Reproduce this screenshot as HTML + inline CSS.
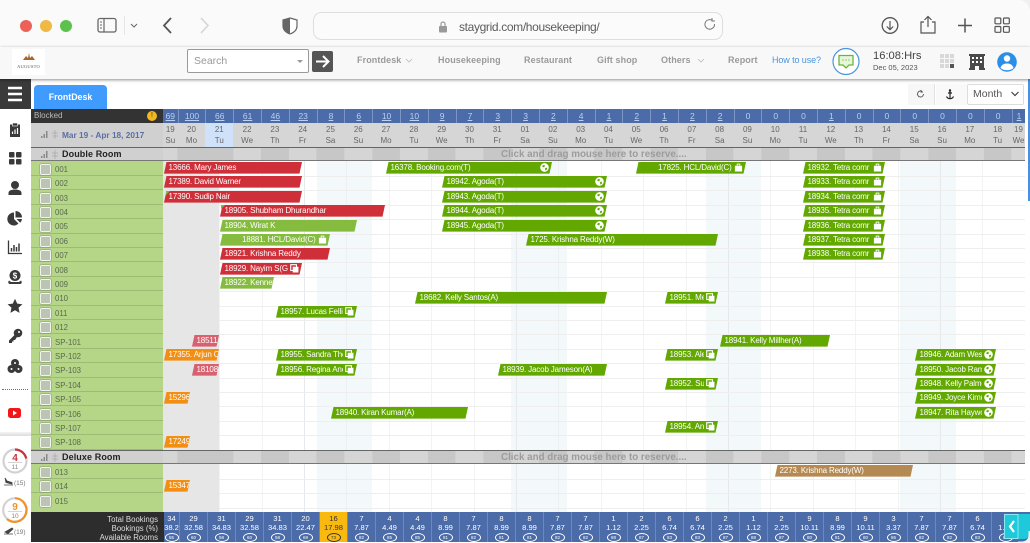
<!DOCTYPE html>
<html><head><meta charset="utf-8"><title>StayGrid</title>
<style>
*{box-sizing:border-box}
html,body{margin:0;padding:0;width:1030px;height:543px;overflow:hidden;background:#fff;font-family:"Liberation Sans",sans-serif}
.a{position:absolute}
#chrome{left:0;top:0;width:1030px;height:47px;background:#fafafa}
#nav{left:0;top:47px;width:1030px;height:32px;background:#f8f8f8;box-shadow:0 1px 3px rgba(0,0,0,.45);z-index:5}
.n{position:absolute;top:55px;font-size:9px;font-weight:bold;color:#9a9a9a;z-index:6;white-space:nowrap;letter-spacing:.1px}
#hd1,#hd2{left:163px;width:862px;display:flex}
#hd1{top:109px;height:14px;background:#4b6ba9}
#hd2{top:123px;height:24px;background:#d6d6d6}
#hd1 i,#hd2 i,#ft i{display:block;font-style:normal;flex:none;text-align:center}
#hd1 i{width:27.8px;border-left:1px solid #7d95c2;font-size:8.5px;line-height:14px;color:#b9d0f0;text-decoration:underline}
#hd1 i.z{text-decoration:none}
#hd2 i{width:27.8px;font-size:8px;line-height:10.5px;padding-top:2px;color:#666}
#hd1 i.f,#hd2 i.f{width:14.6px;border-left:0}
#hd2 i.t{background:#d0e2fa}
#grid{left:163px;top:161px;width:862px;height:351px;background-image:repeating-linear-gradient(90deg,transparent 0,transparent 14px,#e6e8ea 14px,#e6e8ea 14.6px,transparent 14.6px,transparent 42.4px);background-size:auto}
.we{position:absolute;top:161px;height:351px;width:55.6px;background:#f3f8fb}
.hl{position:absolute;left:163px;width:862px;height:1px;background:#eeeeee}
#hatch{left:163px;top:161px;width:56px;height:351px;background-color:#ececec;background-image:radial-gradient(#d6d6d6 .7px,transparent .8px);background-size:2px 2px}
#gc{left:31px;top:161px;width:132px;height:351px;background:#b5d687}
.band{position:absolute;left:31px;width:994px;height:14px;background:#d0d0d0;border-top:1px solid #666;border-bottom:1px solid #777}
.bandg{position:absolute;left:132px;top:0;right:0;bottom:0;background-image:repeating-linear-gradient(90deg,#c7c7c7 0,#c7c7c7 27.8px,#d5d5d5 27.8px,#d5d5d5 55.6px);background-position:42.4px 0}
.band b{position:absolute;left:31px;top:0;font-size:9px;line-height:13px;color:#222;letter-spacing:.1px}
.band em{position:absolute;left:470px;top:0;font-style:normal;font-weight:bold;font-size:9.8px;line-height:13px;color:#9c9c9c;white-space:nowrap}
.l{position:absolute;left:31px;width:132px;height:14.4px;background:#b5d687;border-bottom:1px solid #9dbb73;font-size:7.8px;line-height:15px;color:#5a6a50;padding-left:24px}
.l:before{content:"";position:absolute;left:9px;top:2px;width:9px;height:9px;background:#bcc4b4;border:1px solid #f1f3ee;box-shadow:0 0 0 .5px #8b977f;border-radius:1.5px}
.b{position:absolute;height:11.6px;clip-path:polygon(2.5px 0,100% 0,calc(100% - 2.5px) 100%,0 100%);color:#fff;font-size:8px;letter-spacing:-.15px;line-height:11.6px;white-space:nowrap;overflow:hidden;padding-left:4.5px;background:#62a800}
.b span{display:block;overflow:hidden}
.b svg{position:absolute;right:3.5px;top:1.3px;width:9px;height:9px}
.R{background:#cf2f38}.L{background:#85bb3e}.O{background:#f28e12}.P{background:#d8616f}.W{background:#b58a52}
.s span{width:calc(100% - 14px)}
#ft{left:164px;top:512px;width:866px;height:29.5px;display:flex;background:#4b6ba9}
#ft i{width:28px;border-left:1px solid #7088b8;color:#fff;font-size:7.6px;line-height:8.6px;padding-top:3px;overflow:hidden;white-space:nowrap}
#ft i.f{width:15px;border-left:0}
#ft i.y{background:#f9b90f;color:#333}
#ft u{display:block;width:14px;height:9px;margin:1px auto 0;border:1px solid #fff;border-radius:50%;font-size:4.5px;line-height:7px;text-decoration:none}
#ft i.y u{border-color:#333}
#fl{left:31px;top:512px;width:133px;height:29.5px;background:#2d2d2d;color:#ddd;font-size:7.8px;line-height:9.3px;text-align:right;padding:2.5px 6px 0 0}
.si{position:absolute;left:7px;width:16px;height:16px}
</style></head><body>

<div id="chrome" class="a"></div>
<svg class="a" style="left:0;top:0;z-index:6" width="1030" height="47">
<circle cx="26" cy="26" r="6" fill="#ea6258"/><circle cx="46" cy="26" r="6" fill="#f0b844"/><circle cx="66" cy="26" r="6" fill="#5cc14d"/>
<rect x="98" y="18.5" width="18" height="13.5" rx="2" fill="none" stroke="#666" stroke-width="1.3"/><line x1="104" y1="19" x2="104" y2="32" stroke="#666" stroke-width="1.2"/><path d="M100 22h2M100 25h2M100 28h2" stroke="#666"/>
<line x1="124.500" y1="16" x2="124.500" y2="35" stroke="#e5e5e5"/>
<path d="M131 24l3 3 3-3" fill="none" stroke="#666" stroke-width="1"/>
<path d="M171 18l-7 7.500 7 7.500" fill="none" stroke="#555" stroke-width="1.800"/>
<path d="M201 18l7 7.500-7 7.500" fill="none" stroke="#d5d5d5" stroke-width="1.600"/>
<path d="M290 18l7 2v6c0 4-3 6.500-7 8-4-1.500-7-4-7-8v-6z" fill="#fff" stroke="#666" stroke-width="1.200"/><path d="M290 18l-7 2v6c0 4 3 6.500 7 8z" fill="#666"/>
<rect x="313.500" y="12.500" width="409" height="27" rx="8" fill="#fbfbfb" stroke="#dedede"/>
<rect x="439" y="26" width="8" height="6.500" rx="1" fill="#999"/><path d="M441 26v-2a2 2 0 0 1 4 0v2" fill="none" stroke="#999" stroke-width="1.200"/>
<path d="M714.500 24a4.800 4.800 0 1 1-2-3.500M712 18v3h3" fill="none" stroke="#777" stroke-width="1"/>
<circle cx="890" cy="25.500" r="7.800" fill="none" stroke="#555" stroke-width="1.300"/><path d="M890 21v8.500M886.800 26.500l3.200 3.200 3.200-3.200" fill="none" stroke="#555" stroke-width="1.200"/>
<path d="M924 22h-3v11h14v-11h-3M928 27V16.500M924.500 20l3.500-3.500 3.500 3.500" fill="none" stroke="#555" stroke-width="1.200"/>
<path d="M965 18.500v14M958 25.500h14" stroke="#555" stroke-width="1.500"/>
<g fill="none" stroke="#555" stroke-width="1.200"><rect x="995" y="18" width="5.800" height="5.800" rx="1"/><rect x="1003.500" y="18" width="5.800" height="5.800" rx="1"/><rect x="995" y="26.500" width="5.800" height="5.800" rx="1"/><rect x="1003.500" y="26.500" width="5.800" height="5.800" rx="1"/></g>
</svg>
<div class="a" style="left:459px;top:19px;font-size:12px;color:#5c5c5c;z-index:7;white-space:nowrap;line-height:16px;letter-spacing:-.35px">staygrid.com/housekeeping/</div>

<div id="nav" class="a"></div>
<div class="a" style="left:12px;top:49px;width:33px;height:26px;background:#fff;z-index:6;text-align:center;font-family:'Liberation Serif',serif;font-size:4.500px;color:#555;padding-top:15px;letter-spacing:.2px">AUGUSTO</div>
<svg class="a" style="left:22px;top:52px;z-index:7" width="14" height="10"><path d="M1 8l3-4 2 2 1-5 1 5 2-2 3 4z" fill="#a5672a"/></svg>
<div class="a" style="left:187px;top:49px;width:122px;height:24px;background:#fff;border:1px solid #9a9a9a;border-radius:2px;z-index:6;font-size:10.500px;line-height:22px;color:#999;padding-left:6px">Search<span class="a" style="right:5px;top:10px;border:3px solid transparent;border-top:3px solid #999"></span></div>
<div class="a" style="left:312px;top:51px;width:21px;height:21px;background:#555;border-radius:2px;z-index:6"></div>
<svg class="a" style="left:312px;top:51px;z-index:7" width="21" height="21"><path d="M4 10.500h12M11 5l5.500 5.500L11 16" fill="none" stroke="#fff" stroke-width="2"/></svg>
<div class="n" style="left:357px">Frontdesk</div>
<div class="n" style="left:438px">Housekeeping</div>
<div class="n" style="left:524px">Restaurant</div>
<div class="n" style="left:597px">Gift shop</div>
<div class="n" style="left:661px">Others</div>
<div class="n" style="left:728px">Report</div>
<div class="n" style="left:772px;color:#4a94dc;font-weight:normal;letter-spacing:-.1px">How to use?</div>
<svg class="a" style="left:0;top:47px;z-index:7" width="1030" height="32">
<path d="M406 12l3 3 3-3M698 12l3 3 3-3" fill="none" stroke="#bbb" stroke-width=".8"/>
<circle cx="846" cy="14.500" r="13" fill="#fff" stroke="#4a94dc" stroke-width="1.200"/>
<path d="M839 8.500h14v9.500h-4l-3 3-3-3h-4z" fill="#e6f6d8" stroke="#6db33f" stroke-width="1.300"/><path d="M842.500 13h1M845.500 13h1M848.500 13h1" stroke="#6db33f" stroke-width="1.200"/>
<g fill="#d8d8d8"><rect x="940" y="7" width="4" height="4"/><rect x="945" y="7" width="4" height="4"/><rect x="950" y="7" width="4" height="4"/><rect x="940" y="12" width="4" height="4"/><rect x="945" y="12" width="4" height="4"/><rect x="950" y="12" width="4" height="4"/><rect x="940" y="17" width="4" height="4"/><rect x="945" y="17" width="4" height="4"/><rect x="950" y="17" width="4" height="4" fill="#555"/></g>
<path d="M969 7h16v2h-1v12h1v2h-6v-4h-4v4h-6v-2h1V9h-1z" fill="#4a4a4a"/><g fill="#fff"><rect x="972" y="10" width="2" height="2"/><rect x="976" y="10" width="2" height="2"/><rect x="980" y="10" width="2" height="2"/><rect x="972" y="14" width="2" height="2"/><rect x="976" y="14" width="2" height="2"/><rect x="980" y="14" width="2" height="2"/></g>
<circle cx="1007" cy="15" r="9.800" fill="#2b8fe8"/><circle cx="1007" cy="11.500" r="3.200" fill="#fff"/><path d="M1000.500 21c1-3.500 3.500-4.500 6.500-4.500s5.500 1 6.500 4.500c-3.500 3-9.500 3-13 0z" fill="#fff"/>
</svg>
<div class="a" style="left:873px;top:49px;font-size:11.200px;color:#444;z-index:7;line-height:14px;white-space:nowrap">16:08:Hrs</div>
<div class="a" style="left:873px;top:63px;font-size:7.500px;color:#555;z-index:7;line-height:10px;white-space:nowrap">Dec 05, 2023</div>

<div class="a" style="left:0;top:79px;width:31px;height:30px;background:#3a3a3a"></div>
<svg class="a" style="left:0;top:79px" width="31" height="30"><path d="M8 9h14M8 15h14M8 21h14" stroke="#fff" stroke-width="2.400"/></svg>
<div class="a" style="left:34px;top:85px;width:73px;height:24px;background:#3f9bfd;border-radius:4px 4px 0 0;color:#fff;font-weight:bold;font-size:8.800px;line-height:24px;text-align:center">FrontDesk</div>
<div class="a" style="left:908px;top:84px;width:27px;height:21px;background:#f7f7f7;border-right:1px solid #e2e2e2"></div>
<div class="a" style="left:936px;top:84px;width:31px;height:21px;background:#f9f9f9"></div>
<svg class="a" style="left:908px;top:84px" width="60" height="21">
<path d="M15.500 10a3 3 0 1 1-1.500-2.600M13 6v2h2" fill="none" stroke="#555" stroke-width=".9"/>
<path d="M42 7v7.500M38.500 12.500c.8 1.600 2 2.200 3.500 2.200s2.700-.6 3.500-2.200M40 9h4" fill="none" stroke="#222" stroke-width="1.200"/><circle cx="42" cy="6.500" r="1.200" fill="#222"/>
</svg>
<div class="a" style="left:967px;top:84px;width:57px;height:21px;background:#fff;border:1px solid #ddd;border-radius:2px;font-size:10.500px;line-height:19px;color:#555;padding-left:5px">Month</div>
<svg class="a" style="left:1010px;top:90px" width="10" height="8"><path d="M1.500 2l3.500 3.500L8.500 2" fill="none" stroke="#444" stroke-width="1.200"/></svg>

<div class="a" style="left:31px;top:109px;width:132px;height:14px;background:#333;color:#bbb;font-size:8px;line-height:14px;padding-left:3px">Blocked</div>
<div class="a" style="left:147px;top:111px;width:10px;height:10px;border-radius:50%;background:#f2b91e;color:#333;font-size:7px;line-height:10px;text-align:center">!</div>
<div class="a" style="left:31px;top:123px;width:132px;height:24px;background:#d0d0d0;color:#5b6fa5;font-weight:bold;font-size:8.300px;line-height:24px;padding-left:31px;white-space:nowrap">Mar 19 - Apr 18, 2017</div>
<svg class="a" style="left:40px;top:129px" width="20" height="11"><path d="M1 9h1.500V7H1zM3.500 9H5V5H3.500zM6 9h1.500V2H6z" fill="#888"/><path d="M15 1v9M12 4h6M12 7h6" stroke="#aaa" stroke-width=".8" fill="none"/></svg>

<div id="hd1" class="a"><i class="f">69</i><i>100</i><i>66</i><i>61</i><i>46</i><i>23</i><i>8</i><i>6</i><i>10</i><i>10</i><i>9</i><i>7</i><i>3</i><i>3</i><i>2</i><i>4</i><i>1</i><i>2</i><i>1</i><i>2</i><i>2</i><i class="z">0</i><i class="z">0</i><i class="z">0</i><i>1</i><i class="z">0</i><i class="z">0</i><i class="z">0</i><i class="z">0</i><i class="z">0</i><i class="z">0</i><i style="width:14px">1</i></div>
<div id="hd2" class="a"><i class="f">19<br>Su</i><i>20<br>Mo</i><i class="t">21<br>Tu</i><i>22<br>We</i><i>23<br>Th</i><i>24<br>Fr</i><i>25<br>Sa</i><i>26<br>Su</i><i>27<br>Mo</i><i>28<br>Tu</i><i>29<br>We</i><i>30<br>Th</i><i>31<br>Fr</i><i>01<br>Sa</i><i>02<br>Su</i><i>03<br>Mo</i><i>04<br>Tu</i><i>05<br>We</i><i>06<br>Th</i><i>07<br>Fr</i><i>08<br>Sa</i><i>09<br>Su</i><i>10<br>Mo</i><i>11<br>Tu</i><i>12<br>We</i><i>13<br>Th</i><i>14<br>Fr</i><i>15<br>Sa</i><i>16<br>Su</i><i>17<br>Mo</i><i>18<br>Tu</i><i style="width:14px">19<br>We</i></div>

<div class="we" style="left:316.600px"></div><div class="we" style="left:511.200px"></div><div class="we" style="left:705.800px"></div><div class="we" style="left:900.400px"></div>
<div id="grid" class="a"></div>
<div class="hl" style="top:176px"></div><div class="hl" style="top:190px"></div><div class="hl" style="top:205px"></div><div class="hl" style="top:219px"></div><div class="hl" style="top:234px"></div><div class="hl" style="top:248px"></div><div class="hl" style="top:262px"></div><div class="hl" style="top:277px"></div><div class="hl" style="top:291px"></div><div class="hl" style="top:306px"></div><div class="hl" style="top:320px"></div><div class="hl" style="top:334px"></div><div class="hl" style="top:349px"></div><div class="hl" style="top:363px"></div><div class="hl" style="top:378px"></div><div class="hl" style="top:392px"></div><div class="hl" style="top:406px"></div><div class="hl" style="top:421px"></div><div class="hl" style="top:435px"></div><div class="hl" style="top:479px"></div><div class="hl" style="top:493px"></div><div class="hl" style="top:508px"></div>
<div id="hatch" class="a"></div>
<div id="gc" class="a"></div>

<div class="l" style="top:161.700px">001</div><div class="l" style="top:176.100px">002</div><div class="l" style="top:190.500px">003</div><div class="l" style="top:204.900px">004</div><div class="l" style="top:219.300px">005</div><div class="l" style="top:233.700px">006</div><div class="l" style="top:248.100px">007</div><div class="l" style="top:262.500px">008</div><div class="l" style="top:276.900px">009</div><div class="l" style="top:291.300px">010</div><div class="l" style="top:305.700px">011</div><div class="l" style="top:320.100px">012</div><div class="l" style="top:334.500px">SP-101</div><div class="l" style="top:348.900px">SP-102</div><div class="l" style="top:363.300px">SP-103</div><div class="l" style="top:377.700px">SP-104</div><div class="l" style="top:392.100px">SP-105</div><div class="l" style="top:406.500px">SP-106</div><div class="l" style="top:420.900px">SP-107</div><div class="l" style="top:435.300px">SP-108</div>
<div class="l" style="top:464.700px">013</div><div class="l" style="top:479.100px">014</div><div class="l" style="top:493.500px;height:19px">015</div>

<div class="band" style="top:147px"><div class="bandg"></div><b>Double Room</b><em>Click and drag mouse here to reserve....</em></div>
<div class="band" style="top:450px"><div class="bandg"></div><b>Deluxe Room</b><em>Click and drag mouse here to reserve....</em></div>
<svg class="a" style="left:40px;top:149px" width="20" height="11"><path d="M1 9h1.500V7H1zM3.500 9H5V5H3.500zM6 9h1.500V2H6z" fill="#888"/><path d="M15 1v9M12 4h6M12 7h6" stroke="#aaa" stroke-width=".8" fill="none"/></svg>
<svg class="a" style="left:40px;top:452px" width="20" height="11"><path d="M1 9h1.500V7H1zM3.500 9H5V5H3.500zM6 9h1.500V2H6z" fill="#888"/><path d="M15 1v9M12 4h6M12 7h6" stroke="#aaa" stroke-width=".8" fill="none"/></svg>

<svg width="0" height="0" style="position:absolute"><defs>
<symbol id="gl" viewBox="0 0 10 10"><circle cx="5" cy="5" r="4.800" fill="#fff"/><path d="M2.500 3l2-1 1 1-1 2-2-1zM5.500 6l2-1 .5 2-2 1.500z" fill="#62a800"/></symbol>
<symbol id="cs" viewBox="0 0 10 10"><path d="M1 3h8v6.500H1z" fill="#fff"/><path d="M3.500 3V1.200h3V3" fill="none" stroke="#fff"/></symbol>
<symbol id="cp" viewBox="0 0 10 10"><path d="M.8.8h6.400v6.400H.8z" fill="none" stroke="#fff" stroke-width="1.200"/><path d="M3 3h6.400v6.400H3z" fill="#fff"/></symbol>
</defs></svg>

<!-- row 0 -->
<div class="b R" style="left:164px;top:162px;width:138px"><span>13666. Mary James</span></div>
<div class="b s" style="left:386px;top:162px;width:166px"><span>16378. Booking.com(T)</span><svg><use href="#gl"/></svg></div>
<div class="b s" style="left:636px;top:162px;width:110px;padding-left:22px"><span>17825. HCL/David(C)</span><svg><use href="#cs"/></svg></div>
<div class="b s" style="left:803px;top:162px;width:82px"><span>18932. Tetra comr</span><svg><use href="#cs"/></svg></div>
<!-- row 1 -->
<div class="b R" style="left:164px;top:176px;width:138px"><span>17389. David Warner</span></div>
<div class="b s" style="left:442px;top:176px;width:165px"><span>18942. Agoda(T)</span><svg><use href="#gl"/></svg></div>
<div class="b s" style="left:803px;top:176px;width:82px"><span>18933. Tetra comr</span><svg><use href="#cs"/></svg></div>
<!-- row 2 -->
<div class="b R" style="left:164px;top:191px;width:138px"><span>17390. Sudip Nair</span></div>
<div class="b s" style="left:442px;top:191px;width:165px"><span>18943. Agoda(T)</span><svg><use href="#gl"/></svg></div>
<div class="b s" style="left:803px;top:191px;width:82px"><span>18934. Tetra comr</span><svg><use href="#cs"/></svg></div>
<!-- row 3 -->
<div class="b R" style="left:220px;top:205px;width:165px"><span>18905. Shubham Dhurandhar</span></div>
<div class="b s" style="left:442px;top:205px;width:165px"><span>18944. Agoda(T)</span><svg><use href="#gl"/></svg></div>
<div class="b s" style="left:803px;top:205px;width:82px"><span>18935. Tetra comr</span><svg><use href="#cs"/></svg></div>
<!-- row 4 -->
<div class="b L" style="left:220px;top:220px;width:137px"><span>18904. Wirat K</span></div>
<div class="b s" style="left:442px;top:220px;width:165px"><span>18945. Agoda(T)</span><svg><use href="#gl"/></svg></div>
<div class="b s" style="left:803px;top:220px;width:82px"><span>18936. Tetra comr</span><svg><use href="#cs"/></svg></div>
<!-- row 5 -->
<div class="b L s" style="left:220px;top:234px;width:110px;padding-left:22px"><span>18881. HCL/David(C)</span><svg><use href="#cs"/></svg></div>
<div class="b" style="left:526px;top:234px;width:192px"><span>1725. Krishna Reddy(W)</span></div>
<div class="b s" style="left:803px;top:234px;width:82px"><span>18937. Tetra comr</span><svg><use href="#cs"/></svg></div>
<!-- row 6 -->
<div class="b R" style="left:220px;top:248px;width:110px"><span>18921. Krishna Reddy</span></div>
<div class="b s" style="left:803px;top:248px;width:82px"><span>18938. Tetra comr</span><svg><use href="#cs"/></svg></div>
<!-- row 7 -->
<div class="b R s" style="left:220px;top:263px;width:82px"><span>18929. Nayim S(G)</span><svg><use href="#cp"/></svg></div>
<!-- row 8 -->
<div class="b L" style="left:220px;top:277px;width:54px"><span>18922. Kennet</span></div>
<!-- row 9 -->
<div class="b" style="left:415px;top:292px;width:192px"><span>18682. Kelly Santos(A)</span></div>
<div class="b s" style="left:665px;top:292px;width:53px"><span>18951. Me</span><svg><use href="#cp"/></svg></div>
<!-- row 10 -->
<div class="b s" style="left:276px;top:306px;width:81px"><span>18957. Lucas Fellir</span><svg><use href="#cp"/></svg></div>
<!-- row 12 -->
<div class="b P" style="left:192px;top:335px;width:27px"><span>18511</span></div>
<div class="b" style="left:720px;top:335px;width:110px"><span>18941. Kelly Millher(A)</span></div>
<!-- row 13 -->
<div class="b O" style="left:164px;top:349px;width:55px"><span>17355. Arjun C</span></div>
<div class="b s" style="left:276px;top:349px;width:81px"><span>18955. Sandra Thc</span><svg><use href="#cp"/></svg></div>
<div class="b s" style="left:665px;top:349px;width:53px"><span>18953. Ale</span><svg><use href="#cp"/></svg></div>
<div class="b s" style="left:915px;top:349px;width:81px"><span>18946. Adam West</span><svg><use href="#gl"/></svg></div>
<!-- row 14 -->
<div class="b P" style="left:192px;top:364px;width:27px"><span>18108</span></div>
<div class="b s" style="left:276px;top:364px;width:81px"><span>18956. Regina Anc</span><svg><use href="#cp"/></svg></div>
<div class="b" style="left:498px;top:364px;width:109px"><span>18939. Jacob Jameson(A)</span></div>
<div class="b s" style="left:915px;top:364px;width:81px"><span>18950. Jacob Ramı</span><svg><use href="#gl"/></svg></div>
<!-- row 15 -->
<div class="b s" style="left:665px;top:378px;width:53px"><span>18952. Sus</span><svg><use href="#cp"/></svg></div>
<div class="b s" style="left:915px;top:378px;width:81px"><span>18948. Kelly Palme</span><svg><use href="#gl"/></svg></div>
<!-- row 16 -->
<div class="b O" style="left:164px;top:392px;width:26px"><span>15296</span></div>
<div class="b s" style="left:915px;top:392px;width:81px"><span>18949. Joyce Kim(1</span><svg><use href="#gl"/></svg></div>
<!-- row 17 -->
<div class="b" style="left:331px;top:407px;width:137px"><span>18940. Kiran Kumar(A)</span></div>
<div class="b s" style="left:915px;top:407px;width:81px"><span>18947. Rita Haywo</span><svg><use href="#gl"/></svg></div>
<!-- row 18 -->
<div class="b s" style="left:665px;top:421px;width:53px"><span>18954. Ani</span><svg><use href="#cp"/></svg></div>
<!-- row 19 -->
<div class="b O" style="left:164px;top:436px;width:26px"><span>17249</span></div>
<!-- deluxe -->
<div class="b W" style="left:775px;top:465px;width:138px"><span>2273. Krishna Reddy(W)</span></div>
<div class="b O" style="left:164px;top:480px;width:26px"><span>15347</span></div>

<svg class="a" style="left:166px;top:191px" width="60" height="20"><path d="M0 0h4L0 4z" fill="#6cc04a"/><path d="M55 14h4l-4 4z" fill="#6cc04a"/></svg>

<div id="fl" class="a">Total Bookings<br>Bookings (%)<br>Available Rooms</div>
<div id="ft" class="a"><i class="f">34<br>38.2<u>55</u></i><i>29<br>32.58<u>60</u></i><i>31<br>34.83<u>58</u></i><i>29<br>32.58<u>60</u></i><i>31<br>34.83<u>58</u></i><i>20<br>22.47<u>69</u></i><i class="y">16<br>17.98<u>73</u></i><i>7<br>7.87<u>82</u></i><i>4<br>4.49<u>85</u></i><i>4<br>4.49<u>85</u></i><i>8<br>8.99<u>81</u></i><i>7<br>7.87<u>82</u></i><i>8<br>8.99<u>81</u></i><i>8<br>8.99<u>81</u></i><i>7<br>7.87<u>82</u></i><i>7<br>7.87<u>82</u></i><i>1<br>1.12<u>88</u></i><i>2<br>2.25<u>87</u></i><i>6<br>6.74<u>83</u></i><i>6<br>6.74<u>83</u></i><i>2<br>2.25<u>87</u></i><i>1<br>1.12<u>88</u></i><i>2<br>2.25<u>87</u></i><i>9<br>10.11<u>80</u></i><i>8<br>8.99<u>81</u></i><i>9<br>10.11<u>80</u></i><i>3<br>3.37<u>86</u></i><i>7<br>7.87<u>82</u></i><i>7<br>7.87<u>82</u></i><i>6<br>6.74<u>83</u></i><i>1<br>1.12<u>88</u></i></div>

<div class="a" style="left:1004px;top:514px;width:26px;height:25px;background:#1dc9da;border-radius:0 0 6px 0"></div>
<svg class="a" style="left:1004px;top:514px" width="26" height="25"><rect x="0.500" y="0.500" width="13.500" height="24" fill="none" stroke="#8ee6ee"/><path d="M10 7l-4 5.500 4 5.500" fill="none" stroke="#fff" stroke-width="2.200"/></svg>
<div class="a" style="left:1028px;top:52px;width:2px;height:149px;background:#4a90e2"></div>
<svg class="a" style="left:1018px;top:531px;z-index:9" width="12" height="12"><path d="M12 0v12H0V10.500h4C8 10.500 10.500 8 10.500 4V0z" fill="#f2f2f2"/></svg>
<svg class="a" style="left:1018px;top:0;z-index:9" width="12" height="12"><path d="M0 0h12v12C12 5 7 0 0 0z" fill="#f0f0f0"/></svg>

<!-- sidebar icons -->
<svg class="si" style="top:122px" viewBox="0 0 16 16"><path d="M3 2.500h10V15H3z" fill="#3a3a3a"/><rect x="5.500" y="1" width="5" height="3" fill="#3a3a3a" stroke="#fff" stroke-width=".6"/><path d="M5.500 12V9.500M8 12V7.500M10.500 12V6" stroke="#fff" stroke-width="1.200"/></svg>
<svg class="si" style="top:150px" viewBox="0 0 16 16"><g fill="#3a3a3a"><rect x="2" y="2" width="5.500" height="5.500" rx="1"/><rect x="9" y="2" width="5.500" height="5.500" rx="1"/><rect x="2" y="9" width="5.500" height="5.500" rx="1"/><rect x="9" y="9" width="5.500" height="5.500" rx="1"/></g></svg>
<svg class="si" style="top:180px" viewBox="0 0 16 16"><circle cx="8" cy="5" r="4" fill="#3a3a3a"/><path d="M1.500 15v-2c0-2.500 3-3.500 6.500-3.500s6.500 1 6.500 3.500v2z" fill="#3a3a3a"/></svg>
<svg class="si" style="top:210px" viewBox="0 0 16 16"><path d="M7 2.500V9l4.500 4.500A6.500 6.500 0 1 1 7 2.500z" fill="#3a3a3a"/><path d="M8.500 1a6.500 6.500 0 0 1 6.500 6.500H8.500z" fill="#3a3a3a"/><path d="M9.500 9H15a6.500 6.500 0 0 1-1.800 3.800z" fill="#3a3a3a"/></svg>
<svg class="si" style="top:239px" viewBox="0 0 16 16"><path d="M1.500 1.500V14.500H15" fill="none" stroke="#3a3a3a" stroke-width="1.300"/><path d="M4.500 12.500V9M7 12.500V6M9.500 12.500V8M12 12.500V4.500" stroke="#3a3a3a" stroke-width="1.500"/></svg>
<svg class="si" style="top:269px" viewBox="0 0 16 16"><circle cx="8" cy="6.500" r="5.500" fill="#3a3a3a"/><text x="8" y="9.500" text-anchor="middle" font-size="8" font-weight="bold" fill="#fff" font-family="Liberation Sans">$</text><path d="M2 11.500c-1.500 2-.5 3.500 1 3.500h10c1.500 0 2.500-1.500 1-3.500l-2 1.500H4z" fill="#3a3a3a"/></svg>
<svg class="si" style="top:298px" viewBox="0 0 16 16"><path d="M8 .8l2.200 4.800 5.200.6-3.900 3.500 1.100 5.200L8 12.300l-4.600 2.600 1.100-5.200L.6 6.200l5.200-.6z" fill="#3a3a3a"/></svg>
<svg class="si" style="top:328px" viewBox="0 0 16 16"><circle cx="11" cy="5" r="4.300" fill="#3a3a3a"/><path d="M8.500 6L2 12.500V15h3v-1.500h1.500V12H8l2-3z" fill="#3a3a3a"/><circle cx="12" cy="4" r="1" fill="#fff"/></svg>
<svg class="si" style="top:358px" viewBox="0 0 16 16"><g fill="#3a3a3a"><circle cx="8" cy="5" r="4"/><circle cx="4.500" cy="11" r="4"/><circle cx="11.500" cy="11" r="4"/></g><circle cx="8" cy="5" r="1" fill="#fff"/><circle cx="4.500" cy="11" r="1" fill="#fff"/><circle cx="11.500" cy="11" r="1" fill="#fff"/></svg>
<div class="a" style="left:2px;top:389px;width:26px;border-top:1px dotted #4a78b8"></div>
<svg class="a" style="left:8px;top:407px" width="14" height="12"><rect x="0" y="1" width="13" height="10" rx="2.500" fill="#f01818"/><path d="M5 3.500l4 2.500-4 2.500z" fill="#fff"/></svg>
<div class="a" style="left:0;top:432px;width:31px;height:4px;background:linear-gradient(#f4f4f4,#dcdcdc)"></div>

<svg class="a" style="left:0;top:444px" width="31" height="96">
<circle cx="15" cy="17" r="11.500" fill="#fff" stroke="#d2d2d2" stroke-width="2.200"/>
<path d="M15 5.500A11.500 11.500 0 0 1 26.200 14.500" fill="none" stroke="#c8343a" stroke-width="2.200"/>
<line x1="8" y1="18.500" x2="22" y2="18.500" stroke="#bbb" stroke-width=".6"/>
<text x="15" y="17" text-anchor="middle" font-size="10" font-weight="bold" fill="#c8343a" font-family="Liberation Sans">4</text>
<text x="15" y="25" text-anchor="middle" font-size="6.500" fill="#888" font-family="Liberation Sans">11</text>
<path d="M4 41h9M5 34l2 3 5 1.500v1.500L6 38.500z" fill="#444" stroke="#444" stroke-width=".8"/>
<text x="14" y="41" font-size="6.500" fill="#777" font-family="Liberation Sans">(15)</text>
<circle cx="15" cy="66" r="11.800" fill="#fff" stroke="#d2d2d2" stroke-width="2.200"/>
<path d="M15 54.200A11.800 11.800 0 1 1 7 75" fill="none" stroke="#f0932a" stroke-width="2.200"/>
<line x1="8" y1="67.500" x2="22" y2="67.500" stroke="#bbb" stroke-width=".6"/>
<text x="15" y="66" text-anchor="middle" font-size="10" font-weight="bold" fill="#f0932a" font-family="Liberation Sans">9</text>
<text x="15" y="74" text-anchor="middle" font-size="6.500" fill="#888" font-family="Liberation Sans">10</text>
<path d="M4 90h9M5 88l7-4 1 1-5 4.500z" fill="#444" stroke="#444" stroke-width=".8"/>
<text x="14" y="90" font-size="6.500" fill="#777" font-family="Liberation Sans">(19)</text>
</svg>
</body></html>
